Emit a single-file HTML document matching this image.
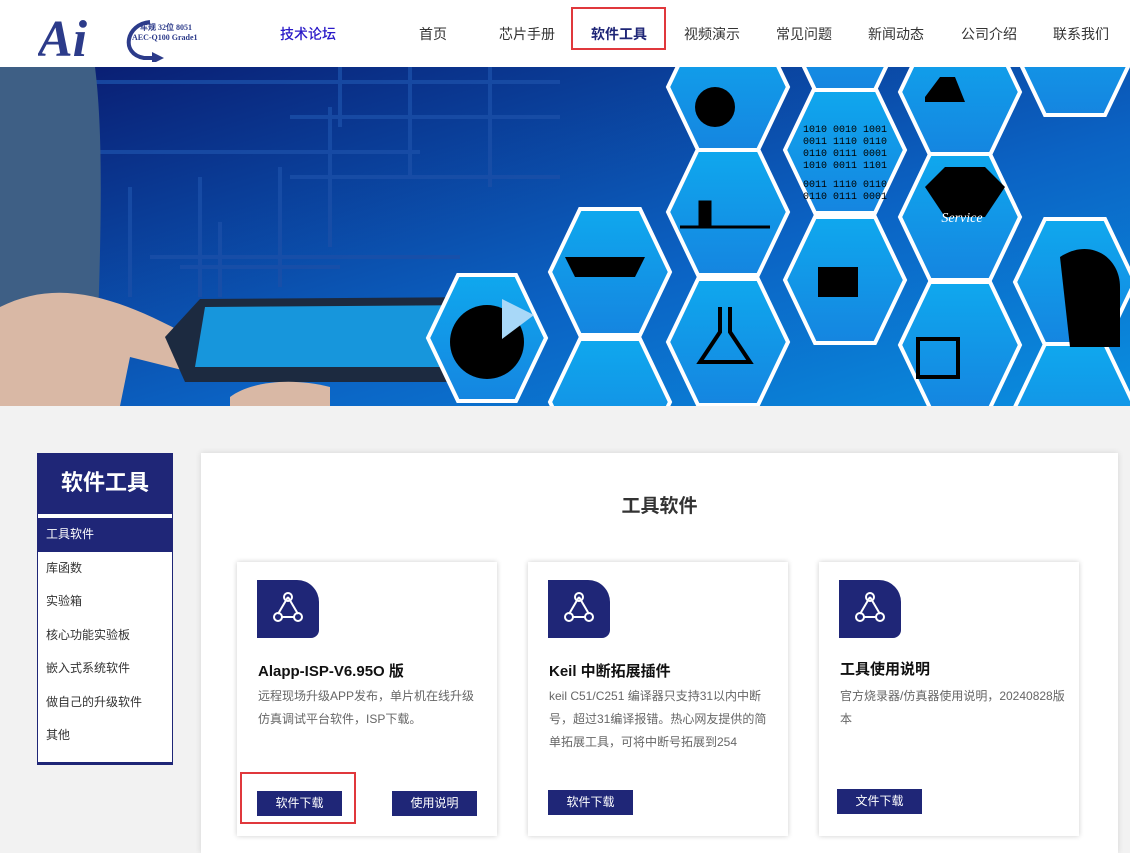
<!DOCTYPE html>
<html><head><meta charset="utf-8"><style>
*{margin:0;padding:0;box-sizing:border-box}
body{width:1130px;height:846px;overflow:hidden;background:#f2f2f2;font-family:"Liberation Sans","Noto Sans CJK SC",sans-serif;position:relative}
.hdr{position:absolute;left:0;top:0;width:1130px;height:67px;background:#fff}
.nav a{position:absolute;top:24px;font-size:14px;color:#333;text-decoration:none}
.banner{position:absolute;left:0;top:67px;width:1130px;height:339px}
.side{position:absolute;left:37px;top:453px;width:136px;height:312px;background:#fff;border-left:1px solid #1f2677;border-right:1px solid #1f2677;border-bottom:3px solid #1f2677}
.side .t{height:61px;background:#1f2677;color:#fff;font-size:22px;font-weight:bold;text-align:center;line-height:60px}
.side .it{height:33.5px;line-height:33px;padding-left:8px;font-size:12px;color:#333}
.side .act{background:#1f2677;color:#fff;margin-top:4px}
.main{position:absolute;left:201px;top:453px;width:917px;height:400px;background:#fff;box-shadow:0 0 6px rgba(0,0,0,.12)}
.h2{position:absolute;left:0;width:917px;top:38px;text-align:center;font-size:19px;font-weight:bold;color:#333}
.card{position:absolute;top:109px;width:260px;height:274px;background:#fff;box-shadow:0 0 5px rgba(0,0,0,.2)}
.ic{position:absolute;left:20px;top:18px;width:62px;height:58px;background:#1f2677;border-radius:0 22px 8px 0}
.ct{position:absolute;left:21px;top:98px;font-size:15px;font-weight:bold;color:#111}
.cd{position:absolute;left:21px;top:123px;width:225px;font-size:12px;color:#666;line-height:23px}
.btn{position:absolute;top:229px;height:25px;width:85px;background:#1f2677;color:#fff;font-size:12px;text-align:center;line-height:25px}
.red{position:absolute;border:2px solid #e0383c}
</style></head><body>
<div class="hdr">
<svg style="position:absolute;left:38px;top:10px" width="170" height="52">
<text x="0" y="46" font-family="Liberation Serif" font-style="italic" font-weight="bold" font-size="52" fill="#2c3b8a">Ai</text>
<path d="M112 12 C88 14 82 44 106 48 L118 48" fill="none" stroke="#2c3b8a" stroke-width="4"/>
<path d="M114 42 L126 48 L114 54Z" fill="#2c3b8a"/>
<text x="102" y="20" font-family="Liberation Serif" font-weight="bold" font-size="8" fill="#2c3b8a">车规 32位 8051</text>
<text x="94" y="30" font-family="Liberation Serif" font-weight="bold" font-size="8" fill="#2c3b8a">AEC-Q100 Grade1</text>
</svg>
<div class="nav">
<a style="left:280px;color:#2a1ac8;font-weight:500">技术论坛</a>
<a style="left:419px">首页</a>
<a style="left:499px">芯片手册</a>
<a style="left:591px;color:#1f2677;font-weight:bold">软件工具</a>
<a style="left:684px">视频演示</a>
<a style="left:776px">常见问题</a>
<a style="left:868px">新闻动态</a>
<a style="left:961px">公司介绍</a>
<a style="left:1053px">联系我们</a>
</div>
<div class="red" style="left:571px;top:7px;width:95px;height:43px"></div>
</div>
<svg class="banner" width="1130" height="339" viewBox="0 0 1130 339">
<defs>
<linearGradient id="bg" x1="0" y1="0" x2="1" y2="1"><stop offset="0" stop-color="#0a1a6e"/><stop offset=".6" stop-color="#0b63c4"/><stop offset="1" stop-color="#0a8fe0"/></linearGradient>
<linearGradient id="hx" x1="0" y1="0" x2="0" y2="1"><stop offset="0" stop-color="#0fa8ee"/><stop offset="1" stop-color="#1585e0"/></linearGradient>
</defs>
<rect width="1130" height="339" fill="url(#bg)"/>
<g stroke="#1a4fa8" stroke-width="4" fill="none" opacity=".8">
<path d="M90 15H560M100 85H420M290 50H560M290 110H560M130 120V230M200 110V230M280 100V220M330 40V180M410 0V110M340 0V60M490 0V120M150 190H460M220 155V230M180 200H340"/>
</g>
<path d="M0 0H95C105 80 100 200 95 339H0Z" fill="#3e5f85"/>
<path d="M0 240C60 210 120 230 200 275C230 290 225 310 190 305L130 290 120 339H0Z" fill="#d9b8a5"/>
<path d="M165 270L200 232 500 230 470 315H185Z" fill="#1c2a40"/>
<path d="M205 240L490 238 465 300H195Z" fill="#1796dc"/>
<path d="M230 330C250 315 290 310 330 320V339H230Z" fill="#d9b8a5"/>
<g stroke="#fff" stroke-width="4" fill="url(#hx)">
<polygon points="428,271 458,208 516,208 546,271 516,334 458,334"/>
<polygon points="550,205 580,142 640,142 670,205 640,268 580,268"/>
<polygon points="550,335 580,272 640,272 670,335 640,398 580,398"/>
<polygon points="668,145 698,82 758,82 788,145 758,208 698,208"/>
<polygon points="668,275 698,212 758,212 788,275 758,338 698,338"/>
<polygon points="668,20 698,-43 758,-43 788,20 758,83 698,83"/>
<polygon points="785,83 815,20 875,20 905,83 875,146 815,146"/>
<polygon points="785,213 815,150 875,150 905,213 875,276 815,276"/>
<polygon points="785,-40 815,-103 875,-103 905,-40 875,23 815,23"/>
<polygon points="900,25 930,-38 990,-38 1020,25 990,88 930,88"/>
<polygon points="900,150 930,87 990,87 1020,150 990,213 930,213"/>
<polygon points="900,278 930,215 990,215 1020,278 990,341 930,341"/>
<polygon points="1015,215 1045,152 1105,152 1135,215 1105,278 1045,278"/>
<polygon points="1015,-15 1045,-78 1105,-78 1135,-15 1105,48 1045,48"/>
<polygon points="1015,340 1045,277 1105,277 1135,340 1105,403 1045,403"/>
</g>
<circle cx="487" cy="275" r="37" fill="#000"/><path d="M502 232V272L534 248Z" fill="#a8d8f8"/>
<path d="M565 190h80l-10 20h-60z" fill="#000"/>
<circle cx="715" cy="40" r="20" fill="#000"/><path d="M680 160h90M700 160V135h10v25" stroke="#000" stroke-width="3"/>
<path d="M720 240v25l-20 30h50l-20-30v-25" fill="none" stroke="#000" stroke-width="4"/>
<text x="845" y="65" fill="#000" font-size="10" font-family="Liberation Mono" text-anchor="middle">1010 0010 1001</text>
<text x="845" y="77" fill="#000" font-size="10" font-family="Liberation Mono" text-anchor="middle">0011 1110 0110</text>
<text x="845" y="89" fill="#000" font-size="10" font-family="Liberation Mono" text-anchor="middle">0110 0111 0001</text>
<text x="845" y="101" fill="#000" font-size="10" font-family="Liberation Mono" text-anchor="middle">1010 0011 1101</text>
<text x="845" y="120" fill="#000" font-size="10" font-family="Liberation Mono" text-anchor="middle">0011 1110 0110</text>
<text x="845" y="132" fill="#000" font-size="10" font-family="Liberation Mono" text-anchor="middle">0110 0111 0001</text>
<rect x="818" y="200" width="40" height="30" fill="#000"/>
<path d="M925 120l20-20h40l20 20-20 30h-40z" fill="#000"/>
<text x="962" y="155" fill="#fff" font-size="14" font-style="italic" text-anchor="middle" font-family="Liberation Serif">Service</text>
<rect x="918" y="272" width="40" height="38" fill="none" stroke="#000" stroke-width="4"/>
<path d="M1060 190c30-20 60 0 60 30v60h-50z" fill="#000"/>
<path d="M925 30l15-20 15 0 10 25h-40z" fill="#000"/>
</svg>
<div class="side">
<div class="t">软件工具</div>
<div class="it act">工具软件</div>
<div class="it">库函数</div>
<div class="it">实验箱</div>
<div class="it">核心功能实验板</div>
<div class="it">嵌入式系统软件</div>
<div class="it">做自己的升级软件</div>
<div class="it">其他</div>
</div>
<div class="main">
<div class="h2">工具软件</div>
<div class="card" style="left:36px">
<div class="ic"><svg width="62" height="58"><g fill="none" stroke="#fff" stroke-width="2"><path d="M31 17L21 34M31 17L41 34M24 37H38"/><circle cx="31" cy="17" r="4"/><circle cx="21" cy="37" r="4"/><circle cx="41" cy="37" r="4"/></g></svg></div>
<div class="ct">Alapp-ISP-V6.95O 版</div>
<div class="cd">远程现场升级APP发布，单片机在线升级仿真调试平台软件，ISP下载。</div>
<div class="btn" style="left:20px">软件下载</div>
<div class="btn" style="left:155px">使用说明</div>
</div>
<div class="card" style="left:327px">
<div class="ic"><svg width="62" height="58"><g fill="none" stroke="#fff" stroke-width="2"><path d="M31 17L21 34M31 17L41 34M24 37H38"/><circle cx="31" cy="17" r="4"/><circle cx="21" cy="37" r="4"/><circle cx="41" cy="37" r="4"/></g></svg></div>
<div class="ct">Keil 中断拓展插件</div>
<div class="cd">keil C51/C251 编译器只支持31以内中断号，超过31编译报错。热心网友提供的简单拓展工具，可将中断号拓展到254</div>
<div class="btn" style="left:20px;top:228px">软件下载</div>
</div>
<div class="card" style="left:618px">
<div class="ic"><svg width="62" height="58"><g fill="none" stroke="#fff" stroke-width="2"><path d="M31 17L21 34M31 17L41 34M24 37H38"/><circle cx="31" cy="17" r="4"/><circle cx="21" cy="37" r="4"/><circle cx="41" cy="37" r="4"/></g></svg></div>
<div class="ct" style="top:96px">工具使用说明</div>
<div class="cd">官方烧录器/仿真器使用说明，20240828版本</div>
<div class="btn" style="left:18px;top:227px">文件下载</div>
</div>
</div>
<div class="red" style="left:240px;top:772px;width:116px;height:52px"></div>
</body></html>
